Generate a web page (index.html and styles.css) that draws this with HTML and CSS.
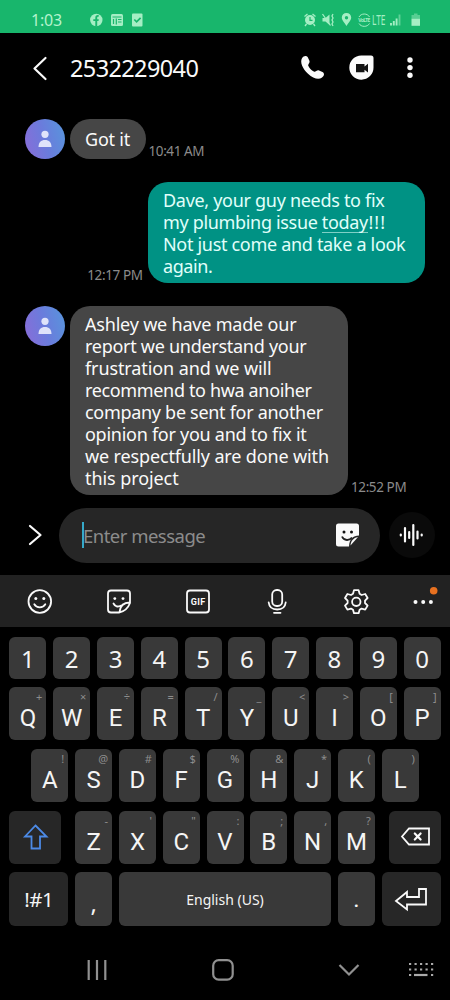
FILE: index.html
```html
<!DOCTYPE html>
<html lang="en">
<head>
<meta charset="utf-8">
<title>Messages</title>
<link rel="stylesheet" href="styles.css">
</head>
<body>
<div class="phone">
  <div class="status">
    <span class="clock">1:03</span>
    <svg class="status-left" width="56" height="16" viewBox="89 12 56 16">
      <circle cx="96.300" cy="20" r="6.200"/>
      <path class="cut" d="M95.300 26.500v-5.400h-2v-1.900h2v-1.500c0-2 1.100-3 3.400-2.700v1.700c-1.100-.1-1.500.2-1.500 1.100v1.400h1.600l-.3 1.900h-1.300v5.400z"/>
      <rect x="111" y="14" width="12" height="12" rx="1.500"/>
      <path class="cutline" d="M112.500 17h9M113.500 19v5M118 19.500h3.500M118 22h3.500M116.300 18.500v6"/>
      <rect x="132" y="13.500" width="10.500" height="13" rx="1"/>
      <path class="cutline thick" d="M134.300 19.500l2.300 2.300 4-4"/>
    </svg>
    <svg class="status-right" width="120" height="16" viewBox="302 12 120 16">
      <circle cx="310" cy="20" r="5"/>
      <path class="st" d="M304.500 16.500l3-2.500M315.500 16.500l-3-2.500M306.500 24l-1.500 2M313.500 24l1.500 2"/>
      <path class="cutline" d="M310 17v3.300h2.500"/>
      <path d="M322.500 18h3l4-3.500v10.500l-4-3.500h-3z"/>
      <path class="st" d="M322.500 14l8 11.500M333 14l-1 2 1 2-1 2 1 2-1 2 1 2"/>
      <path fill-rule="evenodd" d="M346.500 13c-2.700 0-4.700 2-4.700 4.600 0 3 2.600 5 4.700 8.400 2.100-3.400 4.700-5.400 4.700-8.400 0-2.600-2-4.600-4.700-4.600zm0 3a1.700 1.700 0 1 1 0 3.400 1.700 1.700 0 0 1 0-3.400z"/>
      <path class="st thin" d="M359 17c2-4 8.500-4 10.500 0M359 23.500c2 3.800 8.500 3.800 10.500 0"/>
      <text class="volte" x="358.200" y="21.900" textLength="12">VoLTE</text>
      <text class="lte" x="372" y="24.800" textLength="13.500" lengthAdjust="spacingAndGlyphs">LTE</text>
      <path class="bars" d="M391 25.500v-2.500M393.800 25.500v-4.500M396.600 25.500v-7"/>
      <path class="bars dim" d="M399.500 25.500v-11"/>
      <path class="dim-fill" d="M414 13.500h3.500v1.500h2.500v4h-8.500v-4h2.500z"/>
      <rect x="411.500" y="18.800" width="8.500" height="7"/>
    </svg>
  </div>

  <div class="header">
    <svg class="back" width="16" height="26" viewBox="32 54 16 26"><path class="ln w2" d="M45.500 57l-11 10.500 11 10.500"/></svg>
    <span class="title">2532229040</span>
    <svg class="actions" width="122" height="30" viewBox="298 53 122 30">
      <path d="M302 58.200c1.600-2.800 4.800-3 5.900-.8l1.500 3.300c.9 2-1.900 3.700-1 5.300 1.200 2.500 3 4.300 5.400 5.500 1.700.9 3.200-2 5.200-1.100l3.500 1.600c2.300 1.200 1.900 4.100-.8 5.800-2.900 2-8.600 1-13.700-4-5.600-5.500-8.200-11.700-6-15.600z"/>
      <path d="M361.300 55.500h9.700q2.500 0 2.500 2.500v9.500a12.100 12.100 0 1 1-12.200-12z"/>
      <path class="hole" d="M356 64h8.500v2.400l3.500-2.600v8.600l-3.500-2.600v2.400h-8.500z"/>
      <circle cx="410" cy="60" r="2.700"/><circle cx="410" cy="67.600" r="2.700"/><circle cx="410" cy="75.200" r="2.700"/>
    </svg>
  </div>

  <div class="thread">
    <div class="msg">
      <div class="avatar"><svg width="14" height="18" viewBox="0 0 14 18"><circle cx="7" cy="4.300" r="3.600"/><path d="M.5 17c0-4.500 2.500-7 6.500-7s6.500 2.500 6.500 7z"/></svg></div>
      <div class="bubble short">Got it</div>
      <span class="time">10:41 AM</span>
    </div>
    <div class="msg out">
      <span class="time">12:17 PM</span>
      <div class="bubble mine">
        <span class="line a1">Dave, your guy needs to fix</span>
        <span class="line a2">my plumbing issue <span class="link">today</span><span class="bangs">!!!</span></span>
        <span class="line a3">Not just come and take a look</span>
        <span class="line a4">again.</span>
      </div>
    </div>
    <div class="msg">
      <div class="avatar"><svg width="14" height="18" viewBox="0 0 14 18"><circle cx="7" cy="4.300" r="3.600"/><path d="M.5 17c0-4.500 2.500-7 6.500-7s6.500 2.500 6.500 7z"/></svg></div>
      <div class="bubble long">
        <span class="line b1">Ashley we have made our</span>
        <span class="line b2">report we understand your</span>
        <span class="line b3">frustration and we will</span>
        <span class="line b4">recommend to hwa anoiher</span>
        <span class="line b5">company be sent for another</span>
        <span class="line b6">opinion for you and to fix it</span>
        <span class="line b7">we respectfully are done with</span>
        <span class="line b8">this project</span>
      </div>
      <span class="time">12:52 PM</span>
    </div>
  </div>

  <div class="composer">
    <svg class="expand" width="16" height="24" viewBox="27 523 16 24"><path class="ln w2" d="M30 526l10.500 9-10.500 9"/></svg>
    <div class="field">
      <span class="caret"></span><span class="placeholder">Enter message</span>
      <svg class="sticker" width="26" height="26" viewBox="335 522 26 26">
        <path d="M338.500 523.500h18q2.500 0 2.500 2.500v9.500c-6 0-9.500 3.500-10 11h-10.500q-2.500 0-2.500-2.500v-18q0-2.500 2.500-2.500z"/>
        <path d="M350.500 545.500c.2-4.500 2.800-7.500 7.500-8.500z"/>
        <path class="face" d="M342 536.500c2 4.500 7.500 4.500 10 1"/><circle class="hole" cx="344" cy="532" r="1.500"/><circle class="hole" cx="351.500" cy="532" r="1.500"/>
      </svg>
    </div>
    <div class="voice"><svg width="26" height="24" viewBox="399 523 26 24"><path class="ln w2" d="M400.800 534.500v1M405 528v13.500M409.200 532v6M413.300 525v20M417.500 531.500v7M421.700 534.500v1"/></svg></div>
  </div>

  <div class="tools">
    <svg width="26" height="26" viewBox="27 588 26 26"><circle class="ln" cx="39.800" cy="601.500" r="11.300"/><path class="ln" d="M34.300 604.300c2.300 4 8.700 4 11 0"/><circle cx="35.800" cy="598.600" r="1.500"/><circle cx="43.800" cy="598.600" r="1.500"/></svg>
    <svg width="26" height="26" viewBox="106 588 26 26"><path class="ln" d="M119 612.500h-8q-3 0-3-3v-16q0-3 3-3h16q3 0 3 3v9.500c-2 5.500-5.500 8.500-11 9.500zM119.500 612c.5-6.500 3.500-9.500 10.500-9.500M113.500 603.500c1.500 3 4.500 3.700 7 2.300"/><circle cx="114.800" cy="598.600" r="1.400"/><circle cx="123" cy="598.600" r="1.400"/></svg>
    <svg width="26" height="26" viewBox="185 588 26 26"><rect class="ln" x="187" y="590.500" width="22" height="22" rx="3"/><text class="gif" x="190.800" y="605" textLength="14.500">GIF</text></svg>
    <svg width="26" height="26" viewBox="264 588 26 26"><rect class="ln" x="272.200" y="590" width="10" height="16" rx="4.500"/><path class="ln" d="M268.700 602.500c.5 4.500 3.500 7 8.500 7s8-2.500 8.500-7M274 612.800h6.500"/></svg>
    <svg width="26" height="26" viewBox="343 588 26 26"><path class="ln" d="M354 590.200h4.600l1 3.600 2 1.200 3.600-1 2.400 4-2.600 2.600v2.400l2.600 2.600-2.400 4-3.600-1-2 1.200-1 3.400h-4.600l-1-3.400-2-1.200-3.600 1-2.400-4 2.600-2.600v-2.400l-2.600-2.600 2.400-4 3.600 1 2-1.200z"/><circle class="ln" cx="356.300" cy="601.800" r="4.200"/></svg>
    <svg class="more" width="30" height="32" viewBox="410 585 30 32"><circle cx="415.500" cy="602" r="2"/><circle cx="423.200" cy="602" r="2"/><circle cx="430.900" cy="602" r="2"/><circle class="dot" cx="433.700" cy="590.800" r="3.800"/></svg>
  </div>

  <div class="keyboard">
    <div class="row nums"><b>1</b><b>2</b><b>3</b><b>4</b><b>5</b><b>6</b><b>7</b><b>8</b><b>9</b><b>0</b></div>
    <div class="row"><b>Q<i>+</i></b><b>W<i>×</i></b><b>E<i>÷</i></b><b>R<i>=</i></b><b>T<i>/</i></b><b>Y<i>_</i></b><b>U<i>&lt;</i></b><b>I<i>&gt;</i></b><b>O<i>[</i></b><b>P<i>]</i></b></div>
    <div class="row"><b>A<i>!</i></b><b>S<i>@</i></b><b>D<i>#</i></b><b>F<i>$</i></b><b>G<i>%</i></b><b>H<i>&amp;</i></b><b>J<i>*</i></b><b>K<i>(</i></b><b>L<i>)</i></b></div>
    <div class="row spread">
      <b class="fn shift"><svg width="26" height="28" viewBox="22 824 26 28"><path class="shift-arrow" d="M35.500 826.500l11 11h-6.500v12h-8.500v-12h-6.500z"/></svg></b>
      <div class="row inner"><b>Z<i>-</i></b><b>X<i>'</i></b><b>C<i>"</i></b><b>V<i>:</i></b><b>B<i>;</i></b><b>N<i>,</i></b><b>M<i>?</i></b></div>
      <b class="fn shift"><svg class="del" width="30" height="20" viewBox="399 828 30 20"><path class="ln key" d="M401 837.500l7-8h20v16h-20z"/><path class="ln w2" d="M413.800 834.500l5.800 6M419.600 834.500l-5.800 6"/></svg></b>
    </div>
    <div class="row bottom">
      <b class="fn wide sym">!#1</b><b class="comma">,</b><b class="space">English (US)</b><b class="period">.</b>
      <b class="fn wide"><svg width="34" height="26" viewBox="392 887 34 26"><path class="ln key" d="M394 902l11-9v5h12v-8h7v15.500h-19v5z"/></svg></b>
    </div>
  </div>

  <div class="nav">
    <svg width="22" height="22" viewBox="86 959 22 22"><path class="nv" d="M88.700 960v20M97 960v20M105.300 960v20"/></svg>
    <svg width="24" height="24" viewBox="211 958 24 24"><rect class="nv" x="213.200" y="960.200" width="19.500" height="19.500" rx="5.500"/></svg>
    <svg width="24" height="14" viewBox="337 963 24 14"><path class="nv" d="M339.500 965l9.500 9.500 9.500-9.500"/></svg>
    <svg width="26" height="16" viewBox="408 962 26 16"><path class="dots" d="M409 964h25M409 969.500h25"/><path class="dots" d="M409 975h3M431 975h3"/><path class="dots-bar" d="M414 975h13.500"/></svg>
  </div>
</div>
</body>
</html>
```
FILE: styles.css
```css
* { box-sizing: border-box; }
body { margin: 0; background: #000; font-family: "Noto Sans", sans-serif; }
svg { display: block; flex: none; fill: #fafafa; overflow: visible; }
.phone { width: 450px; height: 1000px; background: #000; display: flex; flex-direction: column; overflow: hidden; }
.ln { fill: none; stroke: #fafafa; stroke-width: 1.800; stroke-linecap: round; stroke-linejoin: round; }
.w2 { stroke-width: 2.200; }
.hole { fill: #111; }

.status { height: 32.500px; background: #18b66c; display: flex; align-items: center; padding: 7px 28px 0 31px; }
.clock { width: 58px; font-size: 16px; line-height: 20px; color: #b5f3cd; letter-spacing: -.2px; }
.status svg { fill: #a5eec4; }
.status-right { margin-left: auto; }
.status .cut { fill: #18b66c; }
.cutline { fill: none; stroke: #18b66c; stroke-width: 1.200; }
.thick { stroke-width: 1.700; }
.st { fill: none; stroke: #a5eec4; stroke-width: 1.300; }
.thin { stroke-width: 1; }
.volte { font-size: 5px; font-weight: 700; }
.lte { font-size: 14.500px; }
.bars { fill: none; stroke: #a5eec4; stroke-width: 1.900; }
.dim { opacity: .5; }
.dim-fill { opacity: .45; }

.header { height: 86.500px; padding: 0 30px 15px 32px; display: flex; align-items: center; }
.title { margin-left: 22px; color: #fafafa; font-size: 23.500px; line-height: 30px; letter-spacing: -.62px; }
.actions { margin-left: auto; }

.thread { height: 389px; display: flex; flex-direction: column; }
.msg { display: flex; align-items: flex-start; padding-left: 25px; margin-bottom: 22.500px; }
.avatar { flex: none; width: 40px; height: 40px; border-radius: 50%; margin-right: 5px; background: linear-gradient(75deg, #8a6cd8, #6a7cdc 50%, #5796dc); display: flex; align-items: center; justify-content: center; }
.avatar svg { fill: #dfe3fa; }
.bubble { flex: none; background: #464646; color: #fafafa; font-size: 18px; line-height: 22.100px; }
.short { width: 75.500px; height: 40px; border-radius: 20px; padding: 9px 0 0 15px; letter-spacing: -.2px; }
.mine { width: 277px; height: 101.500px; border-radius: 20px; background: #009284; color: #e0fffa; padding: 7px 0 0 15px; }
.long { width: 278px; height: 189px; border-radius: 20px; padding: 7px 0 0 15px; }
.line { display: block; white-space: nowrap; }
.a1 { letter-spacing: -.3px; }
.a2 { letter-spacing: -.33px; }
.a3 { letter-spacing: -.31px; }
.a4 { letter-spacing: -.4px; }
.b1 { letter-spacing: -.2px; }
.b2 { letter-spacing: -.28px; }
.b3 { letter-spacing: -.1px; }
.b4 { letter-spacing: -.35px; }
.b5 { letter-spacing: -.3px; }
.b6 { letter-spacing: -.27px; }
.b7 { letter-spacing: -.14px; }
.b8 { letter-spacing: -.08px; }
.link { border-bottom: 1px solid #7fd0c6; display: inline-block; line-height: 20px; }
.bangs { letter-spacing: 1px; margin-left: .5px; }
.time { align-self: flex-end; margin: 0 0 -1px 3px; color: #8b8b8b; font-size: 13.500px; line-height: 17px; letter-spacing: -.4px; white-space: nowrap; }
.out { padding: 0 25px 0 0; justify-content: flex-end; }
.out .time { margin: 0 5.500px -1px 0; }

.composer { height: 66.500px; display: flex; padding: 0 0 12px 27px; align-items: center; }
.field { width: 321px; height: 54.500px; border-radius: 27.500px; background: #262626; margin-left: 16px; padding: 0 19px 0 23px; display: flex; align-items: center; }
.caret { width: 2px; height: 26px; background: #35a9c9; }
.placeholder { color: #8c8c8c; font-size: 18.500px; line-height: 24px; letter-spacing: -.52px; margin: 2px 0 0 -1px; white-space: nowrap; }
.sticker { margin-left: auto; }
.face { fill: none; stroke: #222; stroke-width: 1.800; }
.voice { width: 46px; height: 46px; border-radius: 50%; background: #0a0a0a; margin-left: 9px; display: flex; align-items: center; justify-content: center; }

.tools { height: 52.500px; background: #222; display: flex; align-items: center; gap: 53px; padding-left: 27px; }
.tools .more { margin-left: -12px; }
.gif { font-family: Roboto, sans-serif; font-size: 9px; font-weight: 700; }
.dot { fill: #e87120; }

.keyboard { height: 310px; padding: 9.500px 9.300px 0; display: flex; flex-direction: column; gap: 8.500px; }
.row { display: flex; justify-content: center; gap: 6.800px; height: 53.300px; }
.row.nums { height: 42px; }
.spread { justify-content: space-between; gap: 0; }
b { position: relative; flex: none; width: 37px; border-radius: 6px; background: #393939; color: #f5f5f5; font-family: Roboto, sans-serif; font-weight: 400; font-size: 24px; line-height: 62px; text-align: center; }
.nums b { font-family: "Noto Sans", sans-serif; line-height: 43px; }
i { position: absolute; top: 3px; right: 4px; font-family: "Noto Sans", sans-serif; font-style: normal; font-size: 11px; line-height: 14px; color: #8d8d8d; }
.fn { background: #272727; display: flex; align-items: center; justify-content: center; }
.shift { width: 52px; }
.wide { width: 59px; }
.sym { font-family: "Noto Sans", sans-serif; font-size: 20.500px; letter-spacing: -.5px; line-height: 53px; }
.comma { font-family: "Noto Sans", sans-serif; }
.period { line-height: 54px; }
.space { flex: 1; font-family: "Noto Sans", sans-serif; font-size: 14px; line-height: 55px; }
.key { stroke-width: 1.800; stroke-linejoin: miter; }
.shift-arrow { fill: none; stroke: #4c8ae6; stroke-width: 1.800; }

.nav { height: 63px; display: flex; align-items: center; padding: 3px 16px 0 86px; justify-content: flex-start; }
.nav svg:nth-child(2) { margin-left: 103px; }
.nav svg:nth-child(3) { margin-left: 102px; }
.nav svg:nth-child(4) { margin-left: 47px; }
.nv { fill: none; stroke: #909090; stroke-width: 2.200; }
.dots { fill: none; stroke: #aaa; stroke-width: 2.200; stroke-dasharray: 2.200 3.300; }
.dots-bar { fill: none; stroke: #aaa; stroke-width: 2.200; }
```
